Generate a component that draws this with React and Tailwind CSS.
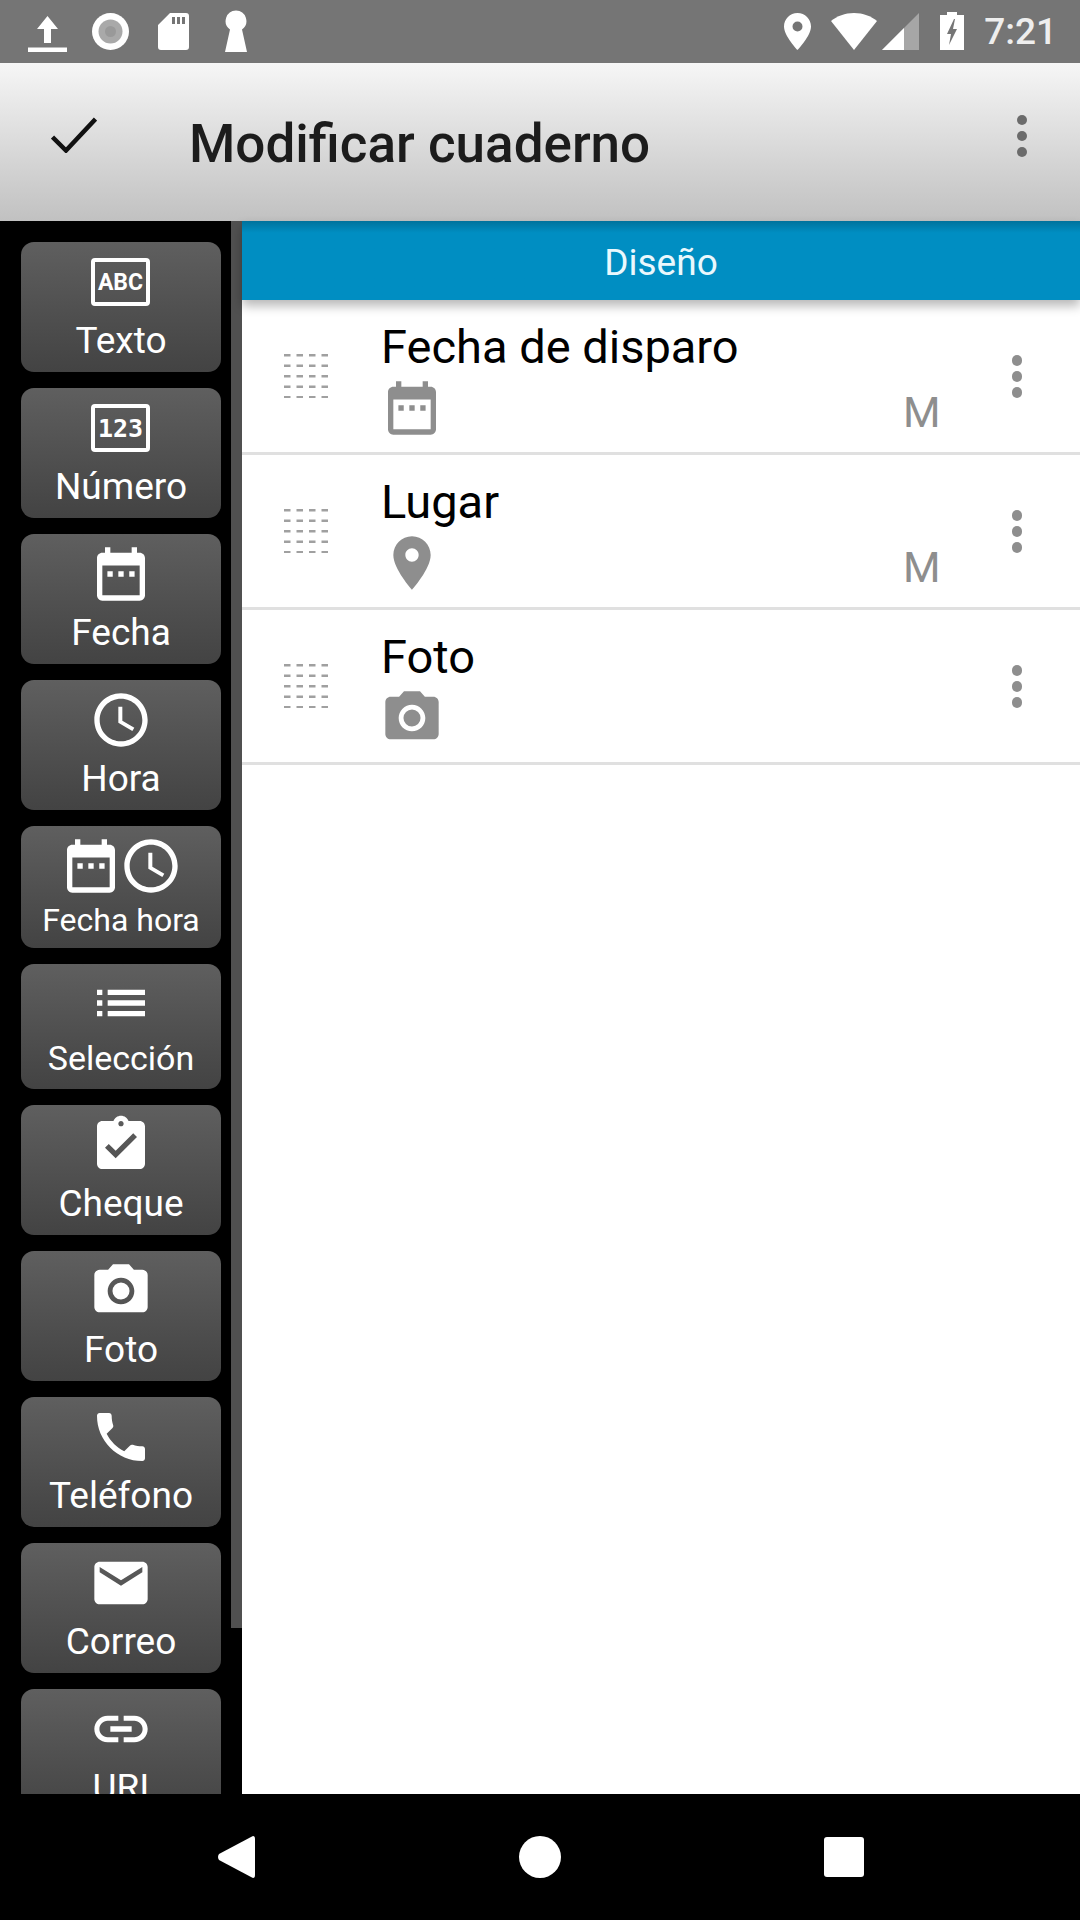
import React from "react";

const P = {
  calendar: "M19 4h-1V2h-2v2H8V2H6v2H5c-1.11 0-2 .9-2 2v14c0 1.1.89 2 2 2h14c1.1 0 2-.9 2-2V6c0-1.1-.9-2-2-2zm0 16H5V8.8h14V20zM6.9 11h2v2h-2zM11 11h2v2h-2zM15.100 11h2v2h-2z",
  clock: "M11.99 2C6.47 2 2 6.48 2 12s4.47 10 9.99 10C17.52 22 22 17.52 22 12S17.52 2 11.99 2zM12 20c-4.42 0-8-3.58-8-8s3.58-8 8-8 8 3.58 8 8-3.58 8-8 8zm.5-13H11v6l5.25 3.15.75-1.23-4.5-2.67z",
  list: "M3 13h2v-2H3v2zm0 4h2v-2H3v2zm0-8h2V7H3v2zm4 4h14v-2H7v2zm0 4h14v-2H7v2zM7 7v2h14V7H7z",
  check: "M19 3h-4.18C14.4 1.84 13.3 1 12 1c-1.3 0-2.4.84-2.82 2H5c-1.1 0-2 .9-2 2v14c0 1.1.9 2 2 2h14c1.1 0 2-.9 2-2V5c0-1.1-.9-2-2-2zm-7 0c.55 0 1 .45 1 1s-.45 1-1 1-1-.45-1-1 .45-1 1-1zm-2 14l-4-4 1.41-1.41L10 14.17l6.59-6.59L18 9l-8 8z",
  camera: "M12 8.800a3.200 3.200 0 1 0 0 6.400 3.200 3.200 0 0 0 0-6.400zM9 2L7.170 4H4c-1.100 0-2 .9-2 2v12c0 1.100.9 2 2 2h16c1.100 0 2-.9 2-2V6c0-1.100-.9-2-2-2h-3.170L15 2H9zm3 15c-2.760 0-5-2.240-5-5s2.240-5 5-5 5 2.240 5 5-2.240 5-5 5z",
  phone: "M6.62 10.79c1.44 2.83 3.76 5.14 6.59 6.59l2.2-2.2c.27-.27.67-.36 1.02-.24 1.12.37 2.33.57 3.57.57.55 0 1 .45 1 1V20c0 .55-.45 1-1 1-9.39 0-17-7.61-17-17 0-.55.45-1 1-1h3.5c.55 0 1 .45 1 1 0 1.25.2 2.45.57 3.57.11.35.03.74-.25 1.02l-2.2 2.2z",
  mail: "M20 4H4c-1.1 0-1.99.9-1.99 2L2 18c0 1.1.9 2 2 2h16c1.1 0 2-.9 2-2V6c0-1.1-.9-2-2-2zm0 4l-8 5-8-5V6l8 5 8-5v2z",
  link: "M3.9 12c0-1.71 1.39-3.1 3.1-3.1h4V7H7c-2.76 0-5 2.24-5 5s2.24 5 5 5h4v-1.9H7c-1.71 0-3.1-1.39-3.1-3.1zM8 13h8v-2H8v2zm9-6h-4v1.9h4c1.71 0 3.1 1.39 3.1 3.1s-1.39 3.1-3.1 3.1h-4V17h4c2.76 0 5-2.24 5-5s-2.24-5-5-5z",
  place: "M12 2C8.13 2 5 5.13 5 9c0 5.25 7 13 7 13s7-7.75 7-13c0-3.87-3.13-7-7-7zm0 9.500c-1.380 0-2.500-1.120-2.500-2.500s1.120-2.500 2.500-2.500 2.500 1.120 2.500 2.500-1.120 2.500-2.500 2.500z",
};

function Icon({ d, className = "" }) {
  return (
    <svg viewBox="0 0 24 24" className={"w-16 h-16 shrink-0 fill-current " + className}>
      <path d={d} fillRule="evenodd" />
    </svg>
  );
}

function TextBox({ label, family, weight, size, y }) {
  return (
    <svg viewBox="0 0 64 64" className="w-16 h-16 shrink-0">
      <rect x="4" y="10" width="55" height="44" rx="2" fill="none" stroke="white" strokeWidth="4" />
      <text x="31.500" y={y} textAnchor="middle" fill="white" fontFamily={family} fontWeight={weight} fontSize={size}>{label}</text>
    </svg>
  );
}

function ToolButton({ icon, label, small }) {
  const box = small === 1 ? "h-[122px] pt-2" : small === 2 ? "h-[125px] pt-[7px]" : "h-[130px] pt-2";
  const text = small === 1 ? "text-[32px] leading-[38px] mt-[3px]" : small === 2 ? "text-[34px] leading-[38px] mt-[4px]" : "text-[37px] leading-[42px] mt-[6px]";
  return (
    <div className={"w-[200px] shrink-0 rounded-[13px] bg-gradient-to-b from-[#5f5f5f] to-[#434343] flex flex-col items-center text-white " + box}>
      <div className="flex justify-center">{icon}</div>
      <div className={text}>{label}</div>
    </div>
  );
}

function Sidebar() {
  return (
    <div className="relative w-[242px] shrink-0 bg-black overflow-hidden">
      <div className="absolute right-0 top-0 w-[11px] h-[1407px] bg-[#505050]" />
      <div className="flex flex-col gap-4 pl-[21px] pt-[21px]">
        <ToolButton label="Texto" icon={<TextBox label="ABC" family="Roboto" weight="700" size="23" y="40" />} />
        <ToolButton label="Número" icon={<TextBox label="123" family="'DejaVu Sans Mono'" weight="700" size="25" y="41" />} />
        <ToolButton label="Fecha" icon={<Icon d={P.calendar} />} />
        <ToolButton label="Hora" icon={<Icon d={P.clock} />} />
        <ToolButton small={1} label="Fecha hora" icon={<><Icon d={P.calendar} /><Icon d={P.clock} className="-ml-[4px]" /></>} />
        <ToolButton small={2} label="Selección" icon={<Icon d={P.list} />} />
        <ToolButton label="Cheque" icon={<Icon d={P.check} />} />
        <ToolButton label="Foto" icon={<Icon d={P.camera} />} />
        <ToolButton label="Teléfono" icon={<Icon d={P.phone} />} />
        <ToolButton label="Correo" icon={<Icon d={P.mail} />} />
        <ToolButton label="URI" icon={<Icon d={P.link} />} />
      </div>
    </div>
  );
}

function DragHandle() {
  const cols = [0, 12.5, 25, 37.5];
  const rows = [0, 10.5, 21, 31.5, 42];
  return (
    <svg viewBox="0 0 44 44" className="w-[44px] h-[44px] shrink-0">
      {rows.map((y) => cols.map((x) => <rect key={x + "-" + y} x={x} y={y} width="6.500" height="2.500" fill="#a0a0a0" />))}
    </svg>
  );
}

function Dots({ color }) {
  return (
    <div className={"flex flex-col gap-[5.500px] " + color}>
      <div className="w-[10.500px] h-[10.500px] rounded-full bg-current" />
      <div className="w-[10.500px] h-[10.500px] rounded-full bg-current" />
      <div className="w-[10.500px] h-[10.500px] rounded-full bg-current" />
    </div>
  );
}

function FieldRow({ title, d, mark }) {
  return (
    <div className="h-[155px] border-b-[3px] border-[#e0e0e0] flex items-center">
      <div className="w-[128px] mr-[12px] shrink-0 flex justify-center">
        <DragHandle />
      </div>
      <div className="flex-1 h-full pt-[20px]">
        <div className="text-[47px] leading-[53px] text-black ml-[-1px]">{title}</div>
        <div className="w-[64px] ml-[-2px] mt-[3px] text-[#8e8e8e]">
          <Icon d={d} />
        </div>
      </div>
      {mark && <div className="self-end mb-[15px] mr-[71px] text-[43px] leading-[50px] text-[#8e8e8e]">{mark}</div>}
      <div className="mr-[58px] w-[10.500px] mt-[1px]">
        <Dots color="text-[#8e8e8e]" />
      </div>
    </div>
  );
}

function StatusBar() {
  return (
    <div className="h-[63px] shrink-0 bg-[#757575] flex items-center pl-[28px] pr-[23px] text-white">
      <svg viewBox="0 0 39 63" className="w-[39px] h-[63px] shrink-0 fill-white">
        <path d="M19.500 16L30 29h-7v14h-7V29H9zM0 47.500h39V52H0z" />
      </svg>
      <svg viewBox="0 0 37 63" className="w-[37px] h-[63px] shrink-0 ml-[25px]">
        <circle cx="18.500" cy="31.500" r="18.500" fill="white" />
        <circle cx="18.500" cy="31.500" r="12" fill="#a9a9a9" />
        <circle cx="18.500" cy="31.500" r="5.500" fill="#999" />
      </svg>
      <svg viewBox="0 0 31 63" className="w-[31px] h-[63px] shrink-0 ml-[29px] fill-white">
        <path fillRule="evenodd" d="M12 13h16q3 0 3 3v31q0 3-3 3H3q-3 0-3-3V25zM14 17v7h3v-7zM19 17v7h3v-7zM24 17v7h3v-7z" />
      </svg>
      <svg viewBox="0 0 22 63" className="w-[22px] h-[63px] shrink-0 ml-[36px] fill-white">
        <path d="M11 10.500a10.500 10.500 0 0 1 6 19l5 22.500H0l5-22.500a10.500 10.500 0 0 1 6-19z" />
      </svg>
      <div className="flex-1" />
      <svg viewBox="0 0 27 63" className="w-[27px] h-[63px] shrink-0 fill-white">
        <path fillRule="evenodd" d="M13.500 13C21 13 27 19 27 26.500 27 36 13.500 50 13.500 50S0 36 0 26.500C0 19 6 13 13.500 13zm0 8.500a5 5 0 1 0 0 10 5 5 0 0 0 0-10z" />
      </svg>
      <svg viewBox="0 0 46 63" className="w-[46px] h-[63px] shrink-0 ml-[20px] fill-white">
        <path d="M23 50L0 21C6 16 14 13 23 13s17 3 23 8z" />
      </svg>
      <svg viewBox="0 0 37 63" className="w-[37px] h-[63px] shrink-0 ml-[5px]">
        <path d="M37 13v37H0z" fill="#a6a6a6" />
        <path d="M22 28v22H0z" fill="white" />
      </svg>
      <svg viewBox="0 0 24 63" className="w-[24px] h-[63px] shrink-0 ml-[21px] fill-white">
        <path fillRule="evenodd" d="M7 15v-3h10v3h7v35H0V15zM14 19l-7 15h4l-2 11 8-16h-4l2-10z" />
      </svg>
      <div className="ml-[20px] text-[37px] leading-[63px] font-medium text-[#eeeeee]">7:21</div>
    </div>
  );
}

function Toolbar() {
  return (
    <div className="h-[158px] shrink-0 bg-gradient-to-b from-[#f6f6f6] to-[#c1c1c1] flex items-center">
      <svg viewBox="0 0 46 36" className="w-[46px] h-[36px] shrink-0 ml-[51px] mb-[14px]">
        <path d="M1.500 20L15 33.500 44.500 2" fill="none" stroke="#111" strokeWidth="4.500" />
      </svg>
      <div className="ml-[92px] text-[53px] leading-[60px] font-medium text-[#1c1c1c] mb-[-4px]">Modificar cuaderno</div>
      <div className="ml-auto mr-[53px] mb-[12px]">
        <Dots color="text-[#6b6b6b]" />
      </div>
    </div>
  );
}

function NavBar() {
  return (
    <div className="h-[126px] shrink-0 bg-black flex items-center">
      <svg viewBox="0 0 38 42" className="w-[38px] h-[42px] shrink-0 ml-[217px] fill-white">
        <path d="M36 0q2 0 2 3v36q0 3-2 3l-2-1L2 24q-2-3 0-6L34 1z" />
      </svg>
      <div className="w-[42px] h-[42px] rounded-full bg-white ml-[264px]" />
      <div className="w-[40px] h-[40px] rounded-[3px] bg-white ml-[263px]" />
    </div>
  );
}

export default function App() {
  return (
    <div className="w-[1080px] h-[1920px] flex flex-col bg-white overflow-hidden font-['Roboto',sans-serif]">
      <StatusBar />
      <Toolbar />
      <div className="flex-1 flex min-h-0">
        <Sidebar />
        <div className="flex-1 flex flex-col min-w-0">
          <div className="relative h-[79px] pt-[4px] shrink-0 flex items-center justify-center text-[37px] text-[#eaf8fd] shadow-[0_6px_10px_rgba(0,0,0,0.28)] bg-gradient-to-b from-[#00729c] from-0% to-[#008ec2] to-15%">
            Diseño
          </div>
          <FieldRow title="Fecha de disparo" d={P.calendar} mark="M" />
          <FieldRow title="Lugar" d={P.place} mark="M" />
          <FieldRow title="Foto" d={P.camera} />
        </div>
      </div>
      <NavBar />
    </div>
  );
}
